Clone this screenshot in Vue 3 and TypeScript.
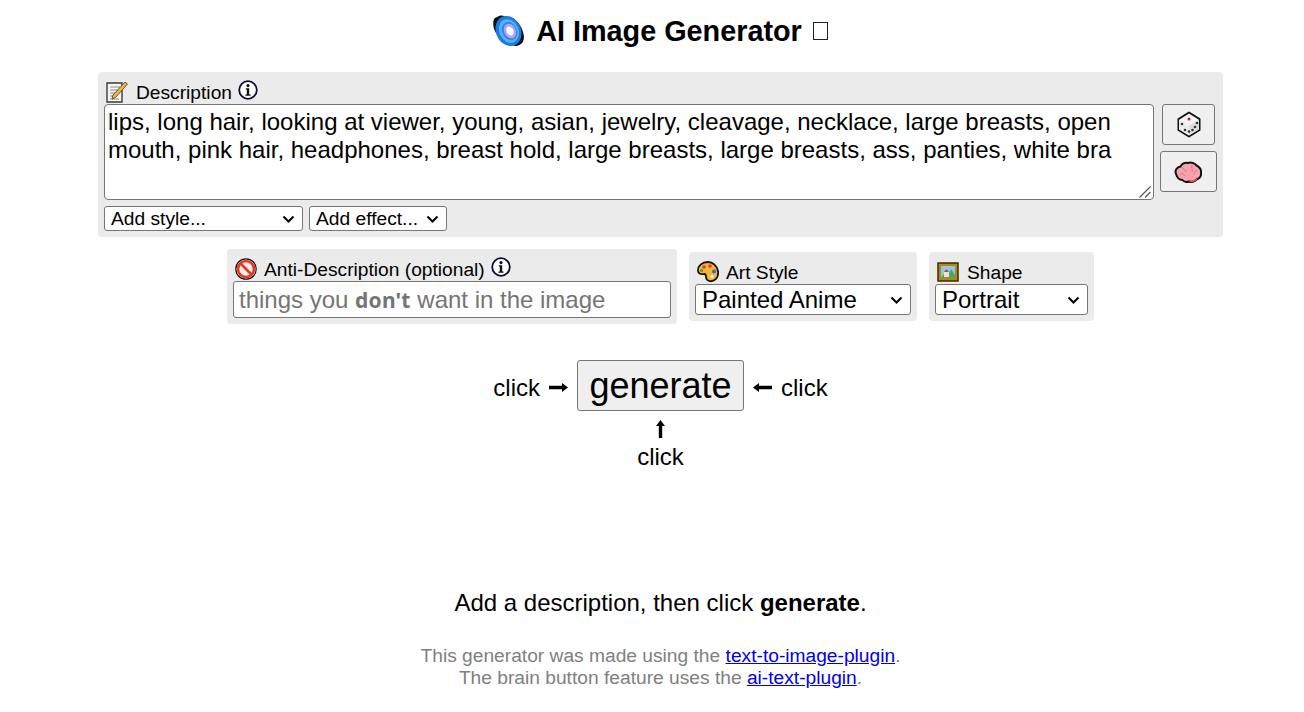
<template>
  <div class="page">
    <h1 class="title">
      <svg class="title-icon" viewBox="0 0 34 34" width="34" height="34">
        <path d="M6 2.500c2-1.500 5-1 7 0 2-.5 4 .5 5.500 1.500 2-.5 3.500.5 4.500 2 3 2 6 6 7.500 10.500 1.500 4 2 8 .5 11-1 2-3 3.500-5 4-2 1-3.500.5-5-.5-1.500.5-3-.5-4-1.500C10 27 5 22 2.500 16 1 12 .5 6 3 4c1-.5 2-1 3-1.500z" fill="#0c0c14" />
        <ellipse cx="16.500" cy="17" rx="12.500" ry="15.500" transform="rotate(-24 16.500 17)" fill="#1b7ae6" />
        <ellipse cx="17" cy="17" rx="9.600" ry="12.200" transform="rotate(-24 17 17)" fill="#55b4f5" />
        <ellipse cx="17.500" cy="17" rx="7.400" ry="9.400" transform="rotate(-24 17.500 17)" fill="#2f8be8" />
        <ellipse cx="18" cy="17" rx="5.800" ry="7.600" transform="rotate(-24 18 17)" fill="#b9a0f6" />
        <ellipse cx="18" cy="17" rx="3.400" ry="4.800" transform="rotate(-24 18 17)" fill="#fff" />
      </svg>
      <span>AI Image Generator</span>
      <span class="tofu"></span>
    </h1>

    <section class="panel main-panel">
      <div class="label-row">
        <svg class="label-icon" viewBox="0 0 22 22" width="22" height="22">
          <path d="M1 2h15v19H1z" fill="#f6f6f2" stroke="#3a3a3a" stroke-width="1.400" />
          <path d="M4 6h10M4 9h9M4 12h6M4 15h4M4 18h9" stroke="#8a8a8a" stroke-width="1" />
          <path d="M6 18l1-4L19 1l2.500 2L9.500 16.500z" fill="#f2b632" stroke="#3a3a3a" stroke-width="0.800" />
        </svg>
        <span class="label-text label-wide">Description</span>
        <svg class="info" viewBox="0 0 20 20" width="20" height="20">
          <circle cx="10" cy="10" r="8.800" fill="#fff" stroke="#0a0a3c" stroke-width="1.800" />
          <path d="M7.800 8.200h3.400v6.200h1.400v1.400H7.400v-1.400h1.400V9.600h-1z" fill="#111" />
          <circle cx="10" cy="5.600" r="1.600" fill="#111" />
        </svg>
      </div>
      <div class="desc-row">
        <div class="desc-wrap">
          <textarea class="desc" v-model="description"></textarea>
          <svg class="grip" viewBox="0 0 12 12" width="12" height="12">
            <path d="M0.500 11.500L11.500 0.500M6 11.500L11.500 6" stroke="#555" stroke-width="1.200" fill="none" />
          </svg>
        </div>
        <div class="side-btns">
          <button class="icon-btn dice-btn" type="button">
            <svg viewBox="0 0 24 27" width="24" height="27">
              <path d="M12 1.500l10.500 6.500v11L12 25.500 1.500 19V8z" fill="#f5f5f5" stroke="#111" stroke-width="2" stroke-linejoin="round" />
              <path d="M12 14.500L22 8.500v10L12 24.500z" fill="#dedede" />
              <path d="M2 8.500l10 6v10l-10-6z" fill="#ececec" />
              <circle cx="12" cy="8" r="1.500" fill="#d3122a" />
              <circle v-for="p in dicePips" :key="p[0] + '-' + p[1]" :cx="p[0]" :cy="p[1]" r="1.300" fill="#333" />
            </svg>
          </button>
          <button class="icon-btn brain-btn" type="button">
            <svg class="brain" viewBox="0 0 28 23" width="28" height="23">
              <path d="M2 13c-1.500-4 1-7 4.500-7.500C8 3 11 1.500 14 2c3-1 7 0 8.500 2.500 3 1.500 5 4 4.500 7.500.500 3-2 5.500-4.500 6.500-2 2.500-5.500 3-7.500 2-2.500 1-5 .5-6.500-1.500C5.500 19 3 16.500 2 13z" fill="#f7a3ae" stroke="#111" stroke-width="2" stroke-linejoin="round" />
              <path d="M8 6c1 3 4 3 5 5M18 4c-1 3 1 4 0 7M23 9c-2 1-3 3-3 5M6 13c2-1 4 0 5 2" stroke="#e8737f" stroke-width="1" fill="none" />
              <path d="M15 20c3-.5 6-1 9-3-1 2-3 3.500-5 4-1.500.500-3 .200-4-1z" fill="#e5485a" />
            </svg>
          </button>
        </div>
      </div>
      <div class="add-row">
        <select class="add-select style-select"><option>Add style...</option></select>
        <select class="add-select effect-select"><option>Add effect...</option></select>
      </div>
    </section>

    <div class="options">
      <section class="panel anti-panel">
        <div class="label-row">
          <svg class="label-icon" viewBox="0 0 22 22" width="22" height="22">
            <circle cx="11" cy="11" r="10.200" fill="#fff" stroke="#111" stroke-width="1.200" />
            <circle cx="11" cy="11" r="8" fill="#fbeeea" stroke="#e8371f" stroke-width="2.600" />
            <path d="M5.500 5.500l11 11" stroke="#e8371f" stroke-width="2.600" />
          </svg>
          <span class="label-text">Anti-Description (optional)</span>
          <svg class="info" viewBox="0 0 20 20" width="20" height="20">
            <circle cx="10" cy="10" r="8.800" fill="#fff" stroke="#0a0a3c" stroke-width="1.800" />
            <path d="M7.800 8.200h3.400v6.200h1.400v1.400H7.400v-1.400h1.400V9.600h-1z" fill="#111" />
            <circle cx="10" cy="5.600" r="1.600" fill="#111" />
          </svg>
        </div>
        <div class="anti-input">things you <b>don't</b> want in the image</div>
      </section>

      <section class="panel pick-panel art-panel">
        <div class="label-row">
          <svg class="label-icon" viewBox="0 0 22 22" width="22" height="22">
            <path d="M11 1C5 1 .5 5 1 10c.5 4 4.500 3 6.500 3 2 0 1 3 2 5 1 2.500 5 3 8 1 3-2 4-5.500 3.500-9C20 5 16 1 11 1z" fill="#f2b632" stroke="#111" stroke-width="1.800" />
            <circle cx="7" cy="6" r="1.800" fill="#e63a2e" />
            <circle cx="13" cy="5" r="1.800" fill="#e63a2e" />
            <circle cx="4.500" cy="9.500" r="1.600" fill="#3aa53a" />
            <circle cx="17" cy="10.500" r="2" fill="#1f6fe0" />
            <circle cx="15" cy="15.500" r="1.800" fill="#f4f0e0" />
          </svg>
          <span class="label-text">Art Style</span>
        </div>
        <select class="big-select"><option>Painted Anime</option></select>
      </section>

      <section class="panel pick-panel shape-panel">
        <div class="label-row">
          <svg class="label-icon" viewBox="0 0 22 22" width="22" height="22">
            <rect x="1" y="2" width="20" height="18" fill="#b8860b" stroke="#3a2a08" stroke-width="1.500" />
            <rect x="4" y="5" width="14" height="12" fill="#8ec6ee" />
            <path d="M4 17l4-6 3 3 3-6 4 6v3z" fill="#4aa860" />
            <path d="M7 11h5v5H7z" fill="#e8e2da" />
            <path d="M7 11l2.500-3 2.500 3z" fill="#d9402e" />
          </svg>
          <span class="label-text label-wide">Shape</span>
        </div>
        <select class="big-select"><option>Portrait</option></select>
      </section>
    </div>

    <div class="generate-area">
      <div class="generate-row">
        <span class="click-word">click</span>
        <svg class="arrow" viewBox="0 0 19 9" width="19" height="9"><path d="M0 2.800h13V0l6 4.500-6 4.500V6.200H0z" fill="#000" /></svg>
        <button class="generate-btn" type="button">generate</button>
        <svg class="arrow" viewBox="0 0 19 9" width="19" height="9"><path d="M19 2.800H6V0L0 4.500 6 9V6.200h13z" fill="#000" /></svg>
        <span class="click-word">click</span>
      </div>
      <div class="up-arrow">
        <svg viewBox="0 0 9 18" width="9" height="18"><path d="M4.500 0L9 6H6.200v12H2.800V6H0z" fill="#000" /></svg>
      </div>
      <div class="click-under">click</div>
    </div>

    <p class="hint">Add a description, then click <b>generate</b>.</p>

    <p class="credits">
      This generator was made using the <a href="#">text-to-image-plugin</a>.<br />
      The brain button feature uses the <a href="#">ai-text-plugin</a>.
    </p>
  </div>
</template>

<script setup lang="ts">
import { ref } from 'vue'

const description = ref(
  'lips, long hair, looking at viewer, young, asian, jewelry, cleavage, necklace, large breasts, open mouth, pink hair, headphones, breast hold, large breasts, large breasts, ass, panties, white bra'
)

const dicePips: number[][] = [
  [5, 13],
  [8, 19],
  [12, 20.5],
  [15.5, 19],
  [18, 16],
  [20, 12]
]
</script>

<style>
body {
  background: #fff;
}
</style>

<style scoped>
.page {
  width: 1304px;
  height: 712px;
  padding-left: 17px;
  box-sizing: border-box;
  overflow: hidden;
  font-family: 'Liberation Sans', Arial, sans-serif;
  color: #000;
  text-align: center;
}

.title {
  display: flex;
  justify-content: center;
  align-items: center;
  gap: 10px;
  height: 34px;
  margin: 0;
  padding-top: 14px;
  font-size: 28.8px;
  font-weight: 700;
  line-height: 34px;
}

.title-icon {
  margin-left: -1px;
}

.tofu {
  width: 15px;
  height: 18px;
  margin-left: 1px;
  border: 1px solid #222;
  box-sizing: border-box;
}

.panel {
  background: #ebebeb;
  border-radius: 4px;
  box-sizing: border-box;
  text-align: left;
}

.main-panel {
  width: 1125px;
  height: 165px;
  margin: 24px auto 0;
  padding: 7px 6px 0;
}

.label-row {
  display: flex;
  align-items: center;
  height: 25px;
  font-size: 19.2px;
}

.label-icon {
  margin-left: 2px;
}

.label-text {
  margin-left: 7px;
  padding-top: 2px;
  line-height: 25px;
}

.label-wide {
  margin-left: 8px;
}

.info {
  margin: -4px 0 0 6px;
}

.desc-row {
  display: flex;
  align-items: flex-start;
}

.desc-wrap {
  position: relative;
  width: 1050px;
  height: 96px;
}

.desc {
  display: block;
  width: 100%;
  height: 100%;
  margin: 0;
  padding: 3px;
  box-sizing: border-box;
  border: 1px solid #767676;
  border-radius: 4px;
  font-family: inherit;
  font-size: 24px;
  line-height: 28px;
  color: #000;
  background: #fff;
  resize: none;
  outline: none;
}

.grip {
  position: absolute;
  right: 3px;
  bottom: 2px;
  pointer-events: none;
}

.side-btns {
  display: flex;
  flex-direction: column;
  align-items: center;
  width: 57px;
  margin-left: 6px;
  gap: 6px;
}

.icon-btn {
  display: flex;
  align-items: center;
  justify-content: center;
  height: 41px;
  padding: 0;
  background: #efefef;
  border: 1px solid #767676;
  border-radius: 3px;
}

.dice-btn {
  width: 53px;
}

.brain-btn {
  width: 57px;
}

.brain {
  margin: 2px 1px 0 0;
}

.add-row {
  display: flex;
  gap: 6px;
  margin-top: 6px;
}

.add-select,
.big-select {
  appearance: none;
  padding: 0 0 0 6px;
  font-family: inherit;
  color: #000;
  border: 1px solid #767676;
  border-radius: 3px;
  background: #fff url("data:image/svg+xml,%3Csvg xmlns='http://www.w3.org/2000/svg' width='13' height='8'%3E%3Cpath d='M1.500 1.500L6.500 6.500L11.500 1.500' fill='none' stroke='%23000' stroke-width='2'/%3E%3C/svg%3E") no-repeat right 7px center;
}

.add-select {
  height: 25px;
  font-size: 19.2px;
}

.style-select {
  width: 199px;
}

.effect-select {
  width: 138px;
}

.options {
  display: flex;
  justify-content: center;
  align-items: center;
  gap: 12px;
  margin-top: 12px;
  height: 75px;
}

.anti-panel {
  width: 450px;
  height: 75px;
  padding: 7px 6px 0;
}

.anti-input {
  height: 37px;
  padding: 0 5px;
  box-sizing: border-box;
  border: 1px solid #767676;
  border-radius: 3px;
  background: #fff;
  color: #757575;
  font-size: 24px;
  line-height: 36px;
  white-space: nowrap;
}

.anti-input b {
  font-family: 'Noto Sans', sans-serif;
  font-size: 21px;
  letter-spacing: 0.2px;
}

.pick-panel {
  height: 69px;
  padding: 7px 6px 0;
}

.art-panel {
  width: 228px;
}

.shape-panel {
  width: 165px;
}

.big-select {
  display: block;
  width: 100%;
  height: 31px;
  font-size: 24px;
}

.generate-area {
  margin-top: 36px;
  font-size: 24px;
}

.generate-row {
  display: flex;
  justify-content: center;
  align-items: center;
  height: 51px;
}

.click-word {
  padding-top: 4px;
}

.arrow {
  margin: 4px 9px 0;
}

.generate-btn {
  width: 167px;
  height: 51px;
  padding: 0;
  font-family: inherit;
  font-size: 36px;
  color: #000;
  background: #efefef;
  border: 1px solid #767676;
  border-radius: 3px;
}

.up-arrow {
  height: 18px;
  margin-top: 9px;
  line-height: 18px;
}

.click-under {
  margin-top: 5px;
  line-height: 28px;
}

.hint {
  margin: 118px 0 0;
  font-size: 24px;
  line-height: 28px;
}

.credits {
  margin: 28px 0 0;
  color: #808080;
  font-size: 19.2px;
  line-height: 22px;
}

.credits a {
  color: #0000ee;
}
</style>
